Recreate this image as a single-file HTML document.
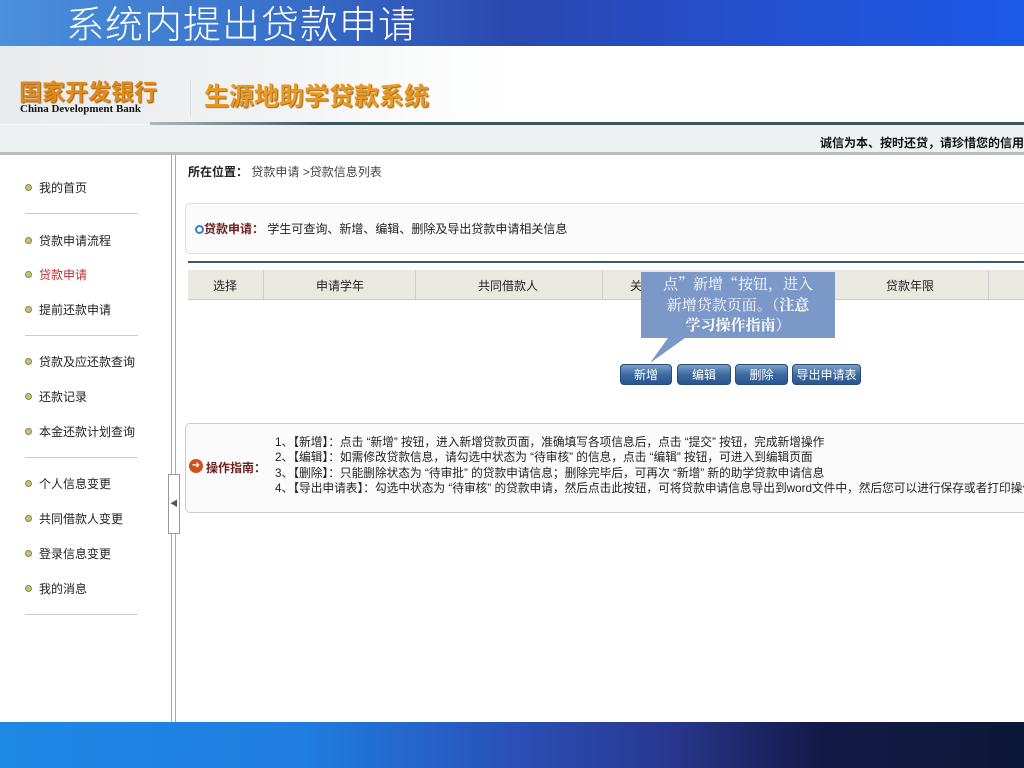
<!DOCTYPE html>
<html><head><meta charset="utf-8"><style>
*{margin:0;padding:0;box-sizing:border-box}
body{width:1024px;height:768px;overflow:hidden;background:#fff;position:relative;font-family:"Liberation Sans","SimSun","Noto Sans CJK SC",sans-serif;font-size:12px;color:#222}
.a{position:absolute;white-space:nowrap}
#title{left:0;top:0;width:1024px;height:46px;background:linear-gradient(90deg,#4a90dc 0%,#3a74cc 25%,#2a48b0 50%,#2450d0 75%,#1a5ae8 100%)}
#title span{position:absolute;left:66px;top:-6px;font-size:38px;color:#fff;font-family:"Noto Sans CJK SC",sans-serif;font-weight:300;letter-spacing:1px}
#hdr{left:0;top:46px;width:1024px;height:78px;background:linear-gradient(90deg,#e8ebed 0%,#f0f2f3 25%,#fafbfb 40%,#fff 50%,#fff 100%)}
.menu{left:25px;font-size:12px;color:#222}
.menu i{display:inline-block;width:7px;height:7px;border-radius:50%;background:#c9c07a;border:1px solid #8a8450;margin-right:7px;vertical-align:1px}
.sep{left:25px;width:113px;height:1px;background:#ccc}
.btn{top:364px;height:21px;border-radius:4px;background:linear-gradient(#7fa0c8,#3b6aa0 50%,#2a5590);color:#fff;font-size:12px;text-align:center;line-height:21px;border:1px solid #2a4a78}
.g{left:275px;font-size:11.7px;color:#222}
</style></head><body>
<div class="a" id="title"><span>系统内提出贷款申请</span></div>
<div class="a" id="hdr"></div>
<div class="a" style="left:19px;top:76px;font-size:23px;font-weight:bold;color:#e08a1a;font-family:'Noto Sans CJK SC',sans-serif;line-height:28px;text-shadow:1px 1px 1px #a06010">国家开发银行</div>
<div class="a" style="left:20px;top:103px;font-size:11px;font-weight:bold;font-family:'Liberation Serif',serif;color:#111">China Development Bank</div>
<div class="a" style="left:190px;top:80px;width:1px;height:36px;background:#ddd"></div>
<div class="a" style="left:204px;top:79px;font-size:25px;font-weight:bold;color:#e89a20;font-family:'Noto Sans CJK SC',sans-serif;line-height:32px;text-shadow:1px 1px 1px #a06010">生源地助学贷款系统</div>
<div class="a" style="left:150px;top:122px;width:874px;height:3px;background:linear-gradient(90deg,#b0b8bc,#3e5460 20%,#3e5460 100%)"></div>
<div class="a" style="left:0;top:125px;width:1024px;height:27px;background:#eef1f2"></div>
<div class="a" style="right:0;top:134px;font-size:12px;font-weight:bold;color:#111">诚信为本、按时还贷，请珍惜您的信用</div>
<div class="a" style="left:0;top:152px;width:1024px;height:3px;background:#bbb"></div>
<div class="a" style="left:171px;top:155px;width:5px;height:567px;border-left:1px solid #aaa;border-right:1px solid #aaa"></div>
<div class="a" style="left:168px;top:474px;width:12px;height:60px;background:#fff;border:1px solid #999;font-size:8px;line-height:58px;text-align:center;color:#555">◀</div>

<div class="a menu" style="top:179px"><i></i>我的首页</div>
<div class="a sep" style="top:213px"></div>
<div class="a menu" style="top:232px"><i></i>贷款申请流程</div>
<div class="a menu" style="top:266px;color:#c03030"><i></i>贷款申请</div>
<div class="a menu" style="top:301px"><i></i>提前还款申请</div>
<div class="a sep" style="top:335px"></div>
<div class="a menu" style="top:353px"><i></i>贷款及应还款查询</div>
<div class="a menu" style="top:388px"><i></i>还款记录</div>
<div class="a menu" style="top:423px"><i></i>本金还款计划查询</div>
<div class="a sep" style="top:457px"></div>
<div class="a menu" style="top:475px"><i></i>个人信息变更</div>
<div class="a menu" style="top:510px"><i></i>共同借款人变更</div>
<div class="a menu" style="top:545px"><i></i>登录信息变更</div>
<div class="a menu" style="top:580px"><i></i>我的消息</div>
<div class="a sep" style="top:614px"></div>

<div class="a" style="left:188px;top:163px"><b>所在位置：</b> <span style="color:#444">贷款申请 &gt;贷款信息列表</span></div>
<div class="a" style="left:185px;top:203px;width:845px;height:51px;border:1px solid #ddd;border-radius:5px;background:#fbfbfb"></div>
<div class="a" style="left:195px;top:220px"><span style="display:inline-block;width:9px;height:9px;border-radius:50%;border:2px solid #3a80c0;vertical-align:-1px"></span><b style="color:#702020">贷款申请：</b> 学生可查询、新增、编辑、删除及导出贷款申请相关信息</div>
<div class="a" style="left:188px;top:261px;width:836px;height:2px;background:#3d5a70"></div>
<div class="a" style="left:188px;top:270px;width:836px;height:30px;background:#e9e9e1;border-bottom:1px solid #ccc"></div>
<div class="a" style="left:263px;top:270px;width:1px;height:30px;background:#ccc"></div>
<div class="a" style="left:415px;top:270px;width:1px;height:30px;background:#ccc"></div>
<div class="a" style="left:602px;top:270px;width:1px;height:30px;background:#ccc"></div>
<div class="a" style="left:988px;top:270px;width:1px;height:30px;background:#ccc"></div>
<div class="a" style="left:213px;top:277px">选择</div>
<div class="a" style="left:316px;top:277px">申请学年</div>
<div class="a" style="left:478px;top:277px">共同借款人</div>
<div class="a" style="left:630px;top:277px">关</div>
<div class="a" style="left:886px;top:277px">贷款年限</div>

<svg class="a" style="left:640px;top:271px" width="200" height="95"><polygon points="1,1 195,1 195,67 45,67 10,92 28,67 1,67" fill="#7b98c9"/></svg>
<div class="a" style="left:641px;top:274px;width:194px;text-align:center;color:#fff;font-size:15px;line-height:20.5px;font-family:'Noto Serif CJK SC',serif">点”新增“按钮，进入<br>新增贷款页面。（<b>注意</b><br><b>学习操作指南</b>）</div>

<div class="a btn" style="left:620px;width:52px">新增</div>
<div class="a btn" style="left:677px;width:54px">编辑</div>
<div class="a btn" style="left:735px;width:53px">删除</div>
<div class="a btn" style="left:792px;width:69px">导出申请表</div>

<div class="a" style="left:185px;top:423px;width:845px;height:90px;border:1px solid #ccc;border-radius:5px;background:#fbfbfb"></div>
<div class="a" style="left:189px;top:459px;width:14px;height:14px;border-radius:50%;background:#d0501a;color:#fff;font-size:10px;line-height:14px;text-align:center">➜</div>
<div class="a" style="left:206px;top:459px;font-weight:bold;color:#702020">操作指南：</div>
<div class="a g" style="top:433px">1、【新增】：点击 “新增” 按钮，进入新增贷款页面，准确填写各项信息后，点击 “提交” 按钮，完成新增操作</div>
<div class="a g" style="top:448px">2、【编辑】：如需修改贷款信息，请勾选中状态为 “待审核” 的信息，点击 “编辑” 按钮，可进入到编辑页面</div>
<div class="a g" style="top:464px">3、【删除】：只能删除状态为 “待审批” 的贷款申请信息；删除完毕后，可再次 “新增” 新的助学贷款申请信息</div>
<div class="a g" style="top:479px">4、【导出申请表】：勾选中状态为 “待审核” 的贷款申请，然后点击此按钮，可将贷款申请信息导出到word文件中，然后您可以进行保存或者打印操作</div>

<div class="a" style="left:0;top:722px;width:1024px;height:46px;background:linear-gradient(90deg,#1e88e5 0%,#1f7ddf 30%,#2a50b8 50%,#283890 65%,#141a48 80%,#0c1836 100%)"></div>
</body></html>
